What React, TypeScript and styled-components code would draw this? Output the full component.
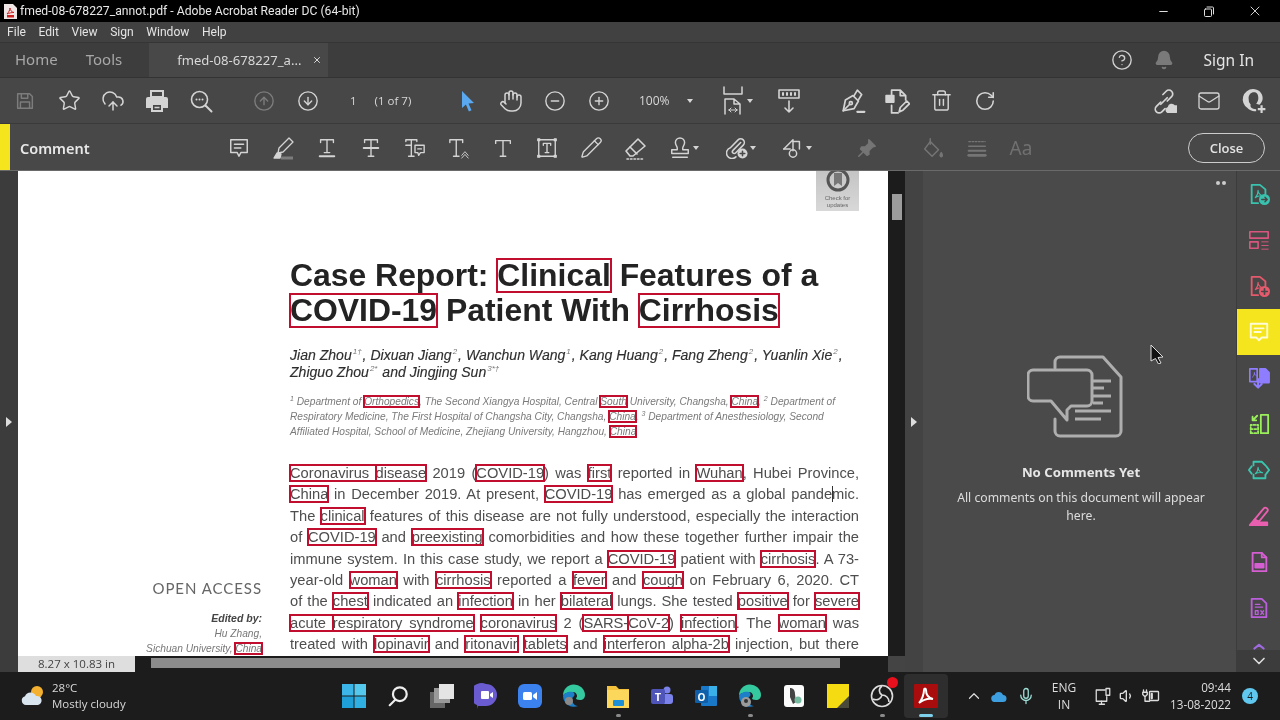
import React from 'react'
import styled, {createGlobalStyle} from 'styled-components'
import {
  Bell,
  ChevronDown,
  ChevronUp,
  CircleArrowDown,
  CircleArrowUp,
  CircleHelp,
  CircleMinus,
  CirclePlus,
  CloudUpload,
  Hand,
  Mail,
  Minus,
  Pencil,
  RotateCw,
  Star,
  Trash2,
  Volume1,
  X,
} from 'lucide-react'

const GlobalStyle = createGlobalStyle`
  html, body {
    margin: 0;
    padding: 0;
    width: 1280px;
    height: 720px;
    overflow: hidden;
    background: #1c1c1c;
    font-family: "Open Sans", "Noto Sans", sans-serif;
  }
`

// the reference is a video frame, everything in it is a little soft
const Screen = styled.div`
  width: 1280px;
  height: 720px;
  display: flex;
  flex-direction: column;
  position: relative;
  overflow: hidden;
  filter: blur(0.35px);
`

/* window chrome */
const TitleBar = styled.div`
  height: 22px;
  background: #000;
  color: #e8e8e8;
  display: flex;
  align-items: center;
  padding-left: 4px;
  gap: 3px;
  font-family: "Roboto", sans-serif;
  font-size: 12.18px;
  white-space: nowrap;
`

const WindowButtons = styled.div`
  margin-left: auto;
  padding-right: 2px;
  display: flex;
  align-items: center;
  color: #ddd;
`

const WindowButton = styled.div`
  width: 46px;
  height: 22px;
  display: flex;
  align-items: center;
  justify-content: center;
`

const MenuBar = styled.div`
  height: 21px;
  background: #414141;
  border-bottom: 1px solid #353535;
  box-sizing: border-box;
  color: #e4e4e4;
  display: flex;
  align-items: center;
  padding-left: 7px;
  gap: 12.5px;
  font-family: "Roboto", sans-serif;
  font-size: 12.1px;
`

const TabBar = styled.div`
  height: 35px;
  background: #3d3d3d;
  border-bottom: 1px solid #333;
  box-sizing: border-box;
  display: flex;
  align-items: stretch;
  font-family: "Noto Sans", sans-serif;
`

const NavTab = styled.div`
  color: #a8a8a8;
  font-size: 15px;
  display: flex;
  align-items: center;
  padding-left: 15px;
  padding-right: 13px;
  margin-top: -3px;
`

const OpenTab = styled.div`
  margin-left: 14px;
  width: 179px;
  background: #484848;
  color: #d8d8d8;
  font-size: 13.1px;
  display: flex;
  align-items: center;
  padding-left: 28px;
  box-sizing: border-box;
  gap: 11px;
`

const TabActions = styled.div`
  margin-left: auto;
  display: flex;
  align-items: center;
  color: #d0d0d0;
  gap: 21px;
  padding-right: 26px;
`

const SignIn = styled.span`
  color: #e4e4e4;
  font-size: 15.5px;
  margin-left: 9px;
`

const ToolBar = styled.div`
  height: 46px;
  background: #474747;
  border-bottom: 1px solid #3a3a3a;
  box-sizing: border-box;
  display: flex;
  align-items: center;
  padding-left: 3px;
  color: #d4d4d4;
`

const Slot = styled.div<{$dim?: boolean; $w?: number}>`
  width: ${(p) => p.$w ?? 44}px;
  height: 30px;
  flex: none;
  display: flex;
  align-items: center;
  justify-content: center;
  gap: 2px;
  color: ${(p) => (p.$dim ? '#7c7c7c' : 'inherit')};
`

const Gap = styled.div<{$w: number}>`
  width: ${(p) => p.$w}px;
  flex: none;
`

const PageField = styled.div`
  width: 115px;
  flex: none;
  display: flex;
  font-size: 11.5px;
  color: #d8d8d8;
  padding-left: 20px;
  box-sizing: border-box;
  gap: 18px;
`

const ZoomField = styled.div`
  width: 94px;
  flex: none;
  display: flex;
  align-items: center;
  font-size: 12px;
  color: #d8d8d8;
  padding-left: 18px;
  box-sizing: border-box;
  gap: 17px;
`

const Caret = styled.span`
  width: 0;
  height: 0;
  border-left: 3.5px solid transparent;
  border-right: 3.5px solid transparent;
  border-top: 4px solid currentColor;
  flex: none;
`

const RightGroup = styled.div`
  margin-left: auto;
  display: flex;
  padding-right: 4px;
`

const CommentBar = styled.div`
  height: 47px;
  background: #484848;
  border-bottom: 1px solid #6a6a6a;
  box-sizing: border-box;
  display: flex;
  align-items: center;
  color: #d4d4d4;
  padding-top: 1px;
`

const YellowTag = styled.div`
  width: 10px;
  align-self: stretch;
  margin-top: -1px;
  background: #f5e51e;
  flex: none;
`

const CommentLabel = styled.div`
  width: 207px;
  padding-left: 10px;
  box-sizing: border-box;
  font-family: "Noto Sans", sans-serif;
  font-size: 14.5px;
  font-weight: 600;
  color: #e8e8e8;
  flex: none;
`

const FontLabel = styled.span`
  font-family: "Noto Sans", sans-serif;
  font-size: 19px;
  color: #707070;
`

const CloseButton = styled.div`
  margin-left: auto;
  margin-right: 15px;
  width: 77px;
  height: 30px;
  box-sizing: border-box;
  border: 1.5px solid #ccc;
  border-radius: 15px;
  display: flex;
  align-items: center;
  justify-content: center;
  font-size: 13px;
  font-weight: 600;
  color: #e4e4e4;
`

/* main area */
const Main = styled.div`
  height: 501px;
  display: flex;
  background: #444;
`

const Gutter = styled.div`
  width: 18px;
  flex: none;
  background: #3c3c3c;
  display: flex;
  align-items: center;
  justify-content: center;
`

const SideArrow = styled.span`
  width: 0;
  height: 0;
  border-top: 5px solid transparent;
  border-bottom: 5px solid transparent;
  border-left: 6px solid #ddd;
`

const DocColumn = styled.div`
  width: 887px;
  flex: none;
  display: flex;
  flex-direction: column;
`

const DocRow = styled.div`
  height: 485px;
  display: flex;
`

const Page = styled.div`
  width: 870px;
  flex: none;
  background: #fff;
  display: flex;
  overflow: hidden;
  font-family: "Liberation Sans", Arial, sans-serif;
`

const VScroll = styled.div`
  width: 17px;
  background: #1c1c1c;
  padding: 23px 3px 0 4px;
  box-sizing: border-box;
`

const VThumb = styled.div`
  height: 26px;
  background: #9c9c9c;
`

const Margin = styled.div`
  width: 244px;
  flex: none;
  padding-top: 407px;
  text-align: right;
  color: #666;
`

const OpenAccess = styled.div`
  font-family: "Lato", sans-serif;
  font-size: 15px;
  line-height: 20px;
  letter-spacing: 0.95px;
  color: #666;
`

const EditedBy = styled.div`
  margin-top: 13px;
  font-size: 10.5px;
  line-height: 15px;
  font-weight: bold;
  font-style: italic;
  color: #444;
`

const Editor = styled.div`
  font-size: 10.2px;
  line-height: 15px;
  font-style: italic;
  color: #777;
  white-space: nowrap;
`

const Article = styled.div`
  width: 569px;
  margin-left: 28px;
  flex: none;
`

const UpdateRow = styled.div`
  height: 40px;
  display: flex;
  justify-content: flex-end;
`

const UpdateBadge = styled.div`
  width: 43px;
  height: 40px;
  background: linear-gradient(#c4c4c4, #d8d8d8);
  display: flex;
  flex-direction: column;
  align-items: center;
  font-size: 6px;
  line-height: 6.5px;
  color: #666;
  text-align: center;
`

const Title = styled.h1`
  margin: 47px 0 0;
  font-size: 31.9px;
  line-height: 35px;
  font-weight: bold;
  color: #232323;
  white-space: nowrap;
`

const Authors = styled.div`
  margin-top: 19px;
  font-size: 14.05px;
  line-height: 17px;
  font-style: italic;
  color: #2e2e2e;
  white-space: nowrap;
  -webkit-text-stroke: 0.15px #2e2e2e;

  sup {
    font-size: 8px;
    line-height: 0;
    color: #777;
    margin: 0 1px;
    -webkit-text-stroke: 0;
  }
`

const Affiliations = styled.div`
  margin-top: 13px;
  font-size: 10.2px;
  line-height: 15px;
  font-style: italic;
  color: #7a7a7a;
  white-space: nowrap;

  sup {
    font-size: 7px;
    line-height: 0;
  }
`

const Body = styled.div`
  margin-top: 24px;
  font-size: 14.7px;
  line-height: 21.4px;
  color: #4e4e4e;
`

const BodyLine = styled.div`
  text-align: justify;
  text-align-last: justify;
  white-space: nowrap;
`

const Mark = styled.span`
  outline: 2px solid #c20e2e;
  outline-offset: -1px;
`

const TitleMark = styled(Mark)`
  display: inline-block;
  line-height: 33px;
`

const Caretline = styled.span`
  border-left: 1px solid #333;
  margin: 0 -1px 0 0;
`

const StatusRow = styled.div`
  height: 16px;
  display: flex;
`

const SizeLabel = styled.div`
  width: 117px;
  flex: none;
  background: #dedede;
  color: #444;
  font-size: 11.5px;
  line-height: 16px;
  text-align: center;
`

const HTrack = styled.div`
  width: 753px;
  flex: none;
  background: #1c1c1c;
  padding: 2px 48px 4px 16px;
  box-sizing: border-box;
`

const HThumb = styled.div`
  height: 10px;
  background: #8c8c8c;
`

const Handle = styled.div`
  width: 18px;
  flex: none;
  background: #434343;
  display: flex;
  align-items: center;
  justify-content: center;
`

const CommentsPane = styled.div`
  width: 313px;
  flex: none;
  background: #4a4a4a;
  display: flex;
  flex-direction: column;
  align-items: center;
  box-sizing: border-box;
  padding: 184px 0 0 3px;
  position: relative;
  color: #e6e6e6;
  text-align: center;
`

const PaneDots = styled.div`
  position: absolute;
  top: 10px;
  right: 10px;
  display: flex;
  gap: 2px;
`

const PaneDot = styled.span`
  width: 4px;
  height: 4px;
  border-radius: 50%;
  background: #ccc;
`

const EmptyArt = styled.div`
  margin-right: 12px;
  height: 84px;
`

const EmptyTitle = styled.div`
  margin-top: 24px;
  font-size: 13.2px;
  line-height: 18px;
  font-weight: 700;
  font-family: "Noto Sans", sans-serif;
`

const EmptyText = styled.div`
  margin-top: 8px;
  width: 260px;
  font-size: 12.2px;
  line-height: 18px;
  color: #ddd;
  font-family: "Noto Sans", sans-serif;
`

const Rail = styled.div`
  width: 44px;
  flex: none;
  background: #474747;
  border-left: 1px solid #3c3c3c;
  box-sizing: border-box;
  display: flex;
  flex-direction: column;
  position: relative;
  overflow: hidden;
`

const RailItem = styled.div<{$on?: boolean}>`
  height: 46px;
  flex: none;
  display: flex;
  align-items: center;
  justify-content: center;
  background: ${(p) => (p.$on ? '#f5e51e' : 'transparent')};
`

const RailDown = styled.div`
  position: absolute;
  left: 0;
  right: 0;
  bottom: 0;
  height: 22px;
  background: #3c3c3c;
  display: flex;
  align-items: center;
  justify-content: center;
  color: #ddd;
`

/* taskbar */
const Taskbar = styled.div`
  height: 48px;
  flex: none;
  background: #1c1c1c;
  display: flex;
  align-items: center;
  color: #e4e4e4;
`

const Weather = styled.div`
  width: 332px;
  flex: none;
  display: flex;
  align-items: center;
  padding-left: 20px;
  box-sizing: border-box;
  gap: 6px;
`

const WeatherText = styled.div`
  font-size: 11.5px;
  line-height: 16px;
  color: #d8d8d8;
`

const TaskItem = styled.div<{$on?: boolean}>`
  width: 44px;
  height: 44px;
  flex: none;
  display: flex;
  align-items: center;
  justify-content: center;
  position: relative;
  border-radius: 4px;
  background: ${(p) => (p.$on ? '#2e2e2e' : 'transparent')};
`

const RunDot = styled.span<{$active?: boolean}>`
  position: absolute;
  bottom: 1px;
  left: 50%;
  width: ${(p) => (p.$active ? 14 : 5)}px;
  height: 3px;
  margin-left: ${(p) => (p.$active ? -7 : -2.5)}px;
  border-radius: 2px;
  background: ${(p) => (p.$active ? '#7fd0ec' : '#8a8a8a')};
`

const RedBadge = styled.span`
  position: absolute;
  top: 3px;
  right: 6px;
  width: 11px;
  height: 11px;
  border-radius: 50%;
  background: #e8101c;
`

const Tray = styled.div`
  margin-left: 13px;
  display: flex;
  align-items: center;
  color: #ddd;
`

const TraySlot = styled.div<{$w: number}>`
  width: ${(p) => p.$w}px;
  flex: none;
  display: flex;
  align-items: center;
  justify-content: center;
`

const Lang = styled.div`
  width: 44px;
  flex: none;
  text-align: center;
  font-size: 12px;
  line-height: 17px;
  margin: 0 4px 0 1px;
`

const Clock = styled.div`
  width: 70px;
  flex: none;
  text-align: right;
  font-size: 11.7px;
  line-height: 17px;
  margin-left: -2px;
`

const Notif = styled.div`
  width: 16px;
  height: 16px;
  border-radius: 50%;
  flex: none;
  margin-left: 11px;
  background: #60c8ee;
  color: #1c1c1c;
  font-size: 10px;
  line-height: 16px;
  text-align: center;
`

const Pointer = styled.svg`
  position: absolute;
  left: 1150px;
  top: 344px;
`

const Ico = ({w = 22, h = 22, vb, sw = 1.6, c = 'currentColor', children}: any) => (
  <svg
    width={w}
    height={h}
    viewBox={vb ?? '0 0 24 24'}
    fill="none"
    stroke={c}
    strokeWidth={sw}
    strokeLinecap="round"
    strokeLinejoin="round"
  >
    {children}
  </svg>
)

const line = (s: string, key: number) =>
  s.split(/(\[[^\]]+\])/).map((part, i) =>
    part.startsWith('[') ? <Mark key={`${key}-${i}`}>{part.slice(1, -1)}</Mark> : part,
  )

const bodyLines = [
  '[Coronavirus ][disease] 2019 ([COVID-19]) was [first] reported in [Wuhan], Hubei Province,',
  '[China] in December 2019. At present, [COVID-19] has emerged as a global pande|mic.',
  'The [clinical] features of this disease are not fully understood, especially the interaction',
  'of [COVID-19] and [preexisting] comorbidities and how these together further impair the',
  'immune system. In this case study, we report a [COVID-19] patient with [cirrhosis]. A 73-',
  'year-old [woman] with [cirrhosis] reported a [fever] and [cough] on February 6, 2020. CT',
  'of the [chest] indicated an [infection] in her [bilateral] lungs. She tested [positive] for [severe]',
  '[acute ][respiratory syndrome] [coronavirus] 2 ([SARS-][CoV-2]) [infection]. The [woman] was',
  'treated with [lopinavir] and [ritonavir] [tablets] and [interferon alpha-2b] injection, but there',
]

const SaveIcon = () => (
  <Ico>
    <path d="M4 4h13l3 3v13H4z" />
    <path d="M8 4v5h7V4M7 20v-7h10v7" />
  </Ico>
)

const PrintIcon = () => (
  <svg width="24" height="24" viewBox="0 0 24 24">
    <path d="M6 2h12v6H6z" fill="none" stroke="currentColor" strokeWidth="2" />
    <path d="M3 8h18a2 2 0 0 1 2 2v9h-5v-5H6v5H1v-9a2 2 0 0 1 2-2z" fill="currentColor" />
    <path d="M7 15h10v7H7z" fill="none" stroke="currentColor" strokeWidth="2" />
    <path d="M9.500 18.500h5" stroke="currentColor" strokeWidth="1.500" />
  </svg>
)

const FindIcon = () => (
  <Ico w={24} h={24}>
    <circle cx="10.5" cy="10.5" r="8" />
    <path d="M16.500 16.500l6 6" strokeWidth="2" />
    <path d="M7.5 10.5h.01M10.5 10.5h.01M13.5 10.5h.01" strokeWidth="2" />
  </Ico>
)

const Arrow = () => (
  <svg width="18" height="24" viewBox="0 0 18 24">
    <path d="M4 2l12 12-5.5.6 3 6.6-2.6 1.2-3-6.8L4 19z" fill="#5aa9f0" />
  </svg>
)

const FitIcon = () => (
  <Ico w={24} h={30} vb="0 0 24 30" sw={1.5}>
    <path d="M3 1v7h18V1" />
    <path d="M4 28V13h9l6 5v10M13 13v5h6" />
    <path d="M8 24h8M8 24l2-2M8 24l2 2M16 24l-2-2M16 24l-2 2" strokeWidth="1" />
  </Ico>
)

const RulerDown = () => (
  <Ico w={24} h={26} vb="0 0 24 26">
    <rect x="2" y="2" width="20" height="8" />
    <path d="M6 5v2M10 5v2M14 5v2M18 5v2" strokeWidth="2" />
    <path d="M12 13v11M8 20l4 4 4-4" />
  </Ico>
)

const PenSign = () => (
  <Ico w={26} h={26}>
    <path d="M3 21l2-10 7-4 5 5-4 7z" />
    <path d="M3 21l6-6M13 7l3-5 4 4-3 5" />
    <circle cx="10" cy="14" r="1.4" />
    <path d="M16 22h7" strokeWidth="2" strokeDasharray="1.5 1" />
  </Ico>
)

const EditFile = () => (
  <Ico w={26} h={26}>
    <path d="M2 7h7v6H2z" fill="currentColor" />
    <path d="M7 7V2h8l5 5v4M15 2v5h5" />
    <path d="M7 16v7h6" />
    <path d="M14 22l1-4 6-6 2.500 2.500-6 6z" />
  </Ico>
)

const LinkCloud = () => (
  <Ico w={26} h={26}>
    <path d="M9 13l-4 4a3.5 3.5 0 0 0 5 5l3-3" />
    <path d="M9 15l6-6M11 6l3-3a3.5 3.5 0 0 1 5 5l-4 4" />
    <path
      d="M15 23a3 3 0 0 1 .5-5.5A3.6 3.6 0 0 1 22 16a3.5 3.5 0 0 1 1.5 7z"
      fill="currentColor"
      stroke="none"
    />
  </Ico>
)

const UserAdd = () => (
  <svg width="26" height="26" viewBox="0 0 24 24">
    <path
      d="M11 1a9.500 9.500 0 0 0-5 17.500c1 1 3 3 8 3v-2c-4 0-6-2-5-4a8 8 0 0 1-2-6c0-3 2-5.500 5-5.500s4 2.500 4 5.500c0 2-1 4-2 5l3 1c2-2 3-4 3-6 0-5-4-8.500-9-8.500z"
      fill="currentColor"
    />
    <path d="M19 16v7M15.500 19.500h7" stroke="currentColor" strokeWidth="2" />
  </svg>
)

const NoteIcon = () => (
  <Ico>
    <path d="M3 3h18v14h-7l-2 4-2-4H3z" />
    <path d="M7 8h10M7 12h7" />
  </Ico>
)

const HighlightPen = () => (
  <Ico w={24} h={24} sw={1.3}>
    <path d="M7 17l1-5L18 2l4 4-10 10z" />
    <path d="M3 22l3-5 4 1-1 4z" fill="currentColor" />
    <path d="M10 22h12" stroke="#7c7c7c" strokeWidth="3" strokeLinecap="butt" />
  </Ico>
)

const TUnder = () => (
  <Ico sw={1.5}>
    <path d="M5 6V3h14v3M12 3v14M9 17h6" />
    <path d="M4 21h16" strokeWidth="2" />
  </Ico>
)

const TStrike = () => (
  <Ico sw={1.5}>
    <path d="M5 6V3h14v3M12 3v18M9 21h6" />
    <path d="M4 12h16" strokeWidth="2" />
  </Ico>
)

const TNote = () => (
  <Ico sw={1.5}>
    <path d="M2 5V3h12v2M8 3v18M5 21h6M2 9h6" />
    <path d="M12 9h10v8h-4l-2 3-1-3h-3z" />
    <path d="M15 13h4" />
  </Ico>
)

const TCaret = () => (
  <Ico sw={1.5}>
    <path d="M2 6V3h14v3M9 3v18M6 21h6" />
    <path d="M15 20l3.500-4 3.500 4M15 23l3.500-4 3.500 4" strokeWidth="1" />
  </Ico>
)

const TPlain = () => (
  <Ico sw={1.5}>
    <path d="M4 7V4h16v3M12 4v17M9 21h6" />
  </Ico>
)

const TBox = () => (
  <Ico sw={1.5}>
    <rect x="3" y="3" width="18" height="18" />
    <path d="M8 9V7h8v2M12 7v10M10 17h4" />
    <path d="M2 2h2v2H2zM20 2h2v2h-2zM2 20h2v2H2zM20 20h2v2h-2z" fill="currentColor" />
  </Ico>
)

const Eraser = () => (
  <Ico w={24} h={24}>
    <path d="M3 15L15 3l7 7-12 10H7z" />
    <path d="M7 11l7 7" />
    <path d="M4 23h16" strokeDasharray="1.5 2" />
  </Ico>
)

const StampIcon = () => (
  <Ico sw={1.6}>
    <path d="M9 12c0-2-2-3-2-6a5 5 0 0 1 10 0c0 3-2 4-2 6v2h6v4H3v-4h6z" />
    <path d="M4 22h16" />
  </Ico>
)

const ClipAdd = () => (
  <Ico sw={1.7}>
    <path d="m16 6-8.414 8.586a2 2 0 0 0 2.829 2.829l8.414-8.586a4 4 0 1 0-5.657-5.657l-8.379 8.551a6 6 0 1 0 6 10" />
    <circle cx="18" cy="18" r="5.500" fill="currentColor" stroke="none" />
    <path d="M18 15.500v5M15.500 18h5" stroke="#484848" />
  </Ico>
)

const Shapes = () => (
  <Ico>
    <path d="M2 13L12 3v12" />
    <path d="M2 13h7M12 5h7v8" />
    <circle cx="12" cy="18" r="4" />
  </Ico>
)

const Pin = () => (
  <Ico c="#757575">
    <path d="M14 3l7 7-3 1-4 4v4l-2 1-7-7 1-2h4l4-4z" fill="#757575" />
    <path d="M8 16l-5 5" />
  </Ico>
)

const Bucket = () => (
  <Ico c="#757575">
    <path d="M9 5l9 9-7 7-8-8z" />
    <path d="M9 2v6" />
    <path d="M21 17c1 2 2 3 1 4s-3 0-2-2z" fill="#757575" />
  </Ico>
)

const Lines = () => (
  <Ico c="#757575">
    <path d="M3 5h18" strokeDasharray="2 1.5" strokeWidth="1.2" />
    <path d="M3 10h18" strokeWidth="1.6" />
    <path d="M3 15h18" strokeWidth="2.4" />
    <path d="M3 20h18" strokeWidth="3" />
  </Ico>
)

const AcrobatFile = ({c, badge}: {c: string; badge: React.ReactNode}) => (
  <Ico c={c} sw={2}>
    <path d="M11 22H4V2h9l6 5v5" />
    <path d="M8 16c2-2 3-6 3-8 0 3 2 5 5 6-3-.5-6 .5-8 2z" strokeWidth="1.2" />
    {badge}
  </Ico>
)

const ArrowBadge = ({c}: {c: string}) => (
  <g>
    <circle cx="18" cy="18" r="6" fill={c} stroke="none" />
    <path d="M15 18h6M18.500 15.500L21 18l-2.500 2.500" stroke="#474747" strokeWidth="1.500" />
  </g>
)

const PlusBadge = ({c}: {c: string}) => (
  <g>
    <circle cx="18" cy="18" r="6" fill={c} stroke="none" />
    <path d="M15 18h6M18 15v6" stroke="#474747" strokeWidth="1.800" />
  </g>
)

const rail: React.ReactNode[] = [
  <AcrobatFile c="#39c2ae" badge={<ArrowBadge c="#39c2ae" />} />,
  <Ico c="#d9567f" sw={1.8}>
    <rect x="2" y="3" width="20" height="7" />
    <rect x="2" y="14" width="9" height="7" />
    <path d="M15 14h7M15 18h7M15 22h7" strokeWidth="1" />
  </Ico>,
  <AcrobatFile c="#e55a6c" badge={<PlusBadge c="#e55a6c" />} />,
  <Ico c="#fdfbd8" sw={2}>
    <path d="M3 3h18v15h-6l-3 3-3-3H3z" />
    <path d="M7 8h10M7 12h7" />
  </Ico>,
  <Ico c="#8f7dff" sw={1.8}>
    <path d="M10 16H2V2h8v14z" />
    <path d="M13 2h6l4 4v11H13z" fill="#8f7dff" />
    <path d="M5 11c1.500-1 2-3 2-5 0 2 1 3 2 3.500" strokeWidth="1" />
    <path d="M11 13v9M7 18.500l4 4 4-4" strokeWidth="2.200" />
  </Ico>,
  <Ico c="#9bef5c" sw={2}>
    <rect x="14" y="2" width="8" height="20" />
    <path d="M3 22v-9h8v9zM3 17.500h8" strokeDasharray="2 2" />
    <path d="M10 3L5 8M5 4v4h4" />
  </Ico>,
  <Ico c="#3ac6ae" sw={2}>
    <path d="M6 7V3h9l4 4M6 17v4h13v-4" />
    <path d="M4 8l-3 4 3 4M20 8l3 4-3 4" />
    <path d="M8 16c2-1.500 3-5 3-7 0 3 2 5 5 6-3-.5-6 0-8 1z" strokeWidth="1.200" />
  </Ico>,
  <Ico c="#ea5fb0" sw={2}>
    <path d="M7 16L17 4a2 2 0 0 1 4 3L12 18z" />
    <path d="M2 22l5-6 5 2 1 1h8v3z" fill="#ea5fb0" />
  </Ico>,
  <Ico c="#d55fd2" sw={2}>
    <path d="M5 2h10l5 5v15H5z" />
    <path d="M15 2v5h5" />
    <rect x="8" y="14" width="9" height="4" fill="#d55fd2" />
  </Ico>,
  <Ico c="#bc5fdc" sw={2}>
    <path d="M4 2h11l5 5v15H4z" />
    <path d="M8 8h5M8 11h8" strokeWidth="1.400" />
    <path d="M8 15h3v4H8zM14 15l3 4M17 15l-3 4" strokeWidth="1.400" />
  </Ico>,
  <Ico c="#a06ae0" sw={2.4}>
    <path d="M7 6l5-4 5 4" />
  </Ico>,
]

const WinLogo = () => (
  <svg width="24" height="24" viewBox="0 0 24 24">
    <rect x="0" y="0" width="11.500" height="11.500" fill="#3cb6e8" />
    <rect x="12.500" y="0" width="11.500" height="11.500" fill="#55c8ee" />
    <rect x="0" y="12.500" width="11.500" height="11.500" fill="#1f9fd8" />
    <rect x="12.500" y="12.500" width="11.500" height="11.500" fill="#30b0e2" />
  </svg>
)

const SearchGlyph = () => (
  <Ico c="#eee" sw={2.4}>
    <circle cx="14" cy="10" r="7.500" />
    <path d="M9 16l-6 6" />
  </Ico>
)

const DesktopGlyph = () => (
  <svg width="24" height="24" viewBox="0 0 24 24">
    <rect x="0" y="8" width="15" height="16" fill="#666" />
    <rect x="4" y="4" width="16" height="15" fill="#999" />
    <rect x="9" y="0" width="15" height="15" fill="#e4e4e4" />
  </svg>
)

const MeetGlyph = () => (
  <svg width="24" height="26" viewBox="0 0 24 26">
    <path d="M12 1a11 11 0 0 1 0 22H4v3l-1-4A11 11 0 0 1 12 1z" fill="#6b5bd0" />
    <rect x="7" y="8" width="8" height="8" rx="1" fill="#fff" />
    <path d="M16 11l3-2v6l-3-2z" fill="#fff" />
  </svg>
)

const ZoomGlyph = () => (
  <svg width="24" height="24" viewBox="0 0 24 24">
    <rect width="24" height="24" rx="6" fill="#3b82ee" />
    <rect x="5" y="8" width="9" height="8" rx="1.500" fill="#fff" />
    <path d="M15 11l4-3v8l-4-3z" fill="#fff" />
  </svg>
)

const EdgeGlyph = ({face}: {face?: boolean}) => (
  <svg width="24" height="24" viewBox="0 0 24 24">
    <path d="M1 12A11 11 0 0 1 23 11c0 3-2 5-5 5-3 0-4-1-4-2 2-1 1-6-3-6-5 0-10 2-10 4z" fill="#35c9a0" />
    <path d="M1 12c1-3 6-5 10-4 2 1 2 4 0 5-2 2-1 8 5 9a11 11 0 0 1-15-10z" fill="#1d7fc8" />
    {face && <circle cx="8" cy="18" r="5" fill="#9a9a9a" />}
    {face && <circle cx="8" cy="17" r="2" fill="#333" />}
    {!face && <circle cx="7" cy="17" r="4" fill="#8a8a8a" />}
  </svg>
)

const FolderGlyph = () => (
  <svg width="24" height="26" viewBox="0 0 24 26">
    <path d="M1 3h9l3 3h10v19H1z" fill="#f4c23c" />
    <rect x="1" y="7" width="22" height="18" fill="#fbd75c" />
    <rect x="7" y="17" width="11" height="6" rx="1" fill="#1c8fd6" />
  </svg>
)

const TeamsGlyph = () => (
  <svg width="24" height="24" viewBox="0 0 24 24">
    <circle cx="17" cy="6" r="3.500" fill="#7b83eb" />
    <rect x="12" y="10" width="11" height="10" rx="3" fill="#7b83eb" />
    <rect x="1" y="5" width="14" height="15" rx="2" fill="#4f55b8" />
    <text x="8" y="16.500" textAnchor="middle" fontSize="11" fontWeight="700" fill="#fff" fontFamily="Open Sans">
      T
    </text>
  </svg>
)

const OutlookGlyph = () => (
  <svg width="24" height="24" viewBox="0 0 24 24">
    <rect x="7" y="2" width="16" height="20" rx="1" fill="#1a78c8" />
    <rect x="15" y="2" width="8" height="10" fill="#39b0e8" />
    <rect x="1" y="6" width="13" height="13" rx="1" fill="#0f5ea8" />
    <text x="7.500" y="16.500" textAnchor="middle" fontSize="10" fontWeight="700" fill="#fff" fontFamily="Open Sans">
      O
    </text>
  </svg>
)

const MailShot = () => (
  <svg width="20" height="22" viewBox="0 0 20 22">
    <rect width="20" height="22" rx="3" fill="#fbfbfb" />
    <path d="M6 3c3 0 5 2 5 6l1 8-3 2-3-7z" fill="#444" />
    <circle cx="14" cy="15" r="3.500" fill="#75bba0" />
  </svg>
)

const Sticky = () => (
  <svg width="22" height="24" viewBox="0 0 22 24">
    <rect width="22" height="24" fill="#f5dc12" />
    <path d="M22 12v12H10z" fill="#4a4a3a" />
  </svg>
)

const ObsGlyph = () => (
  <svg width="24" height="24" viewBox="0 0 24 24" fill="none" stroke="#ddd" strokeWidth="1.600">
    <circle cx="12" cy="12" r="10.500" />
    <path d="M12 2c-4 3-3 7 0 9M12 11c-1 4-5 6-9 4M12 11c4 0 7 3 7 7" />
  </svg>
)

const AcrobatGlyph = () => (
  <svg width="24" height="24" viewBox="0 0 24 24">
    <rect width="24" height="24" rx="1" fill="#a80c0c" />
    <path d="M5 19c3-3 5-9 5-13 0-2 2-2 2 0 0 5 3 8 7 9-5-1-9 0-14 4z" fill="none" stroke="#fff" strokeWidth="2" />
  </svg>
)

const PdfTitleIcon = () => (
  <svg width="13" height="15" viewBox="0 0 13 15">
    <path d="M0 0h9l4 4v11H0z" fill="#f1e6e6" />
    <path d="M3 10c1.500-1.500 3-4 3-6 0 2 1.500 4 4 4.500-2.500 0-5 .5-7 1.500z" fill="none" stroke="#c22" />
    <rect x="3" y="11" width="7" height="2.500" fill="#c22" />
  </svg>
)

const CloudWeather = () => (
  <svg width="26" height="24" viewBox="0 0 26 24">
    <circle cx="17" cy="8" r="6" fill="#f4b030" />
    <path d="M6 21a4.500 4.500 0 0 1-1-8.800A6 6 0 0 1 16 12a4.500 4.500 0 0 1 2 9z" fill="#d8e4ee" />
  </svg>
)

const CloudTray = () => (
  <svg width="16" height="11" viewBox="0 0 16 11">
    <path d="M4 11a3.500 3.500 0 0 1-.5-7A4.500 4.500 0 0 1 12 4a3.500 3.500 0 0 1 0 7z" fill="#3d9fe0" />
  </svg>
)

const Network = () => (
  <Ico w={18} h={18} sw={1.7}>
    <path d="M15 4H3v15h14v-6" />
    <path d="M7 23h7M10 19v4" />
    <rect x="16" y="2" width="5" height="9" />
  </Ico>
)

const Battery = () => (
  <Ico w={18} h={18} sw={1.8}>
    <rect x="10" y="6" width="12" height="12" rx="1" />
    <path d="M13 9v6" strokeWidth="3" />
    <path d="M2 4v3M6 4v3M1 7h6v3l-3 3-3-3zM4 13v6h6" />
  </Ico>
)

const Mic = () => (
  <Ico w={18} h={20} c="#9ee0d8" sw={1.7}>
    <rect x="9" y="2" width="6" height="13" rx="3" />
    <path d="M5 11a7 7 0 0 0 14 0M12 18v4" />
  </Ico>
)

const BigComment = () => (
  <svg width="96" height="84" viewBox="0 0 96 84" fill="none" stroke="#aeaeae" strokeWidth="3" strokeLinecap="round" strokeLinejoin="round">
    <path d="M28 64v12a5 5 0 0 0 5 5h56a5 5 0 0 0 5-5V22L76 2H33a5 5 0 0 0-5 5v6" />
    <path d="M6 15h54a5 5 0 0 1 5 5v26a5 5 0 0 1-5 5H44l-4 4v10L24 46H6a5 5 0 0 1-5-5V20a5 5 0 0 1 5-5z" />
    <path d="M66 26h18M66 33h11M66 41h18M66 48h10M48 56h36M48 64h26" strokeLinecap="butt" />
  </svg>
)

export default function App() {
  return (
    <>
      <GlobalStyle />
      <Screen>
        <TitleBar>
          <PdfTitleIcon />
          <span>fmed-08-678227_annot.pdf - Adobe Acrobat Reader DC (64-bit)</span>
          <WindowButtons>
            <WindowButton>
              <Minus size={13} />
            </WindowButton>
            <WindowButton>
              <Ico w={12} h={13} sw={2}>
                <rect x="3" y="7" width="14" height="15" rx="2" />
                <path d="M8 3h11a2 2 0 0 1 2 2v12" />
              </Ico>
            </WindowButton>
            <WindowButton>
              <X size={16} strokeWidth={1.4} />
            </WindowButton>
          </WindowButtons>
        </TitleBar>
        <MenuBar>
          <span>File</span>
          <span>Edit</span>
          <span>View</span>
          <span>Sign</span>
          <span>Window</span>
          <span>Help</span>
        </MenuBar>
        <TabBar>
          <NavTab>Home</NavTab>
          <NavTab>Tools</NavTab>
          <OpenTab>
            <span>fmed-08-678227_a...</span>
            <X size={10} strokeWidth={2.4} />
          </OpenTab>
          <TabActions>
            <CircleHelp size={22} strokeWidth={1.5} />
            <Bell size={20} fill="#7a7a7a" color="#7a7a7a" />
            <SignIn>Sign In</SignIn>
          </TabActions>
        </TabBar>
        <ToolBar>
          <Slot $dim>
            <SaveIcon />
          </Slot>
          <Slot>
            <Star size={23} strokeWidth={1.5} />
          </Slot>
          <Slot>
            <CloudUpload size={24} strokeWidth={1.5} />
          </Slot>
          <Slot>
            <PrintIcon />
          </Slot>
          <Slot>
            <FindIcon />
          </Slot>
          <Gap $w={19} />
          <Slot $dim>
            <CircleArrowUp size={22} strokeWidth={1.5} />
          </Slot>
          <Slot>
            <CircleArrowDown size={22} strokeWidth={1.5} />
          </Slot>
          <PageField>
            <span>1</span>
            <span>(1 of 7)</span>
          </PageField>
          <Slot>
            <Arrow />
          </Slot>
          <Slot>
            <Hand size={24} strokeWidth={1.5} />
          </Slot>
          <Slot>
            <CircleMinus size={22} strokeWidth={1.5} />
          </Slot>
          <Slot>
            <CirclePlus size={22} strokeWidth={1.5} />
          </Slot>
          <ZoomField>
            <span>100%</span>
            <Caret />
          </ZoomField>
          <Slot>
            <FitIcon />
            <Caret />
          </Slot>
          <Gap $w={8} />
          <Slot>
            <RulerDown />
          </Slot>
          <Gap $w={20} />
          <Slot>
            <PenSign />
          </Slot>
          <Slot>
            <EditFile />
          </Slot>
          <Slot>
            <Trash2 size={23} strokeWidth={1.5} />
          </Slot>
          <Slot>
            <RotateCw size={22} strokeWidth={1.7} />
          </Slot>
          <RightGroup>
            <Slot>
              <LinkCloud />
            </Slot>
            <Slot $w={45}>
              <Mail size={24} strokeWidth={1.3} />
            </Slot>
            <Slot $w={45}>
              <UserAdd />
            </Slot>
          </RightGroup>
        </ToolBar>
        <CommentBar>
          <YellowTag />
          <CommentLabel>Comment</CommentLabel>
          <Slot>
            <NoteIcon />
          </Slot>
          <Slot>
            <HighlightPen />
          </Slot>
          <Slot>
            <TUnder />
          </Slot>
          <Slot>
            <TStrike />
          </Slot>
          <Slot>
            <TNote />
          </Slot>
          <Slot>
            <TCaret />
          </Slot>
          <Slot>
            <TPlain />
          </Slot>
          <Slot>
            <TBox />
          </Slot>
          <Slot>
            <Pencil size={23} strokeWidth={1.4} />
          </Slot>
          <Slot>
            <Eraser />
          </Slot>
          <Gap $w={5} />
          <Slot>
            <StampIcon />
            <Caret />
          </Slot>
          <Gap $w={13} />
          <Slot>
            <ClipAdd />
            <Caret />
          </Slot>
          <Gap $w={12} />
          <Slot>
            <Shapes />
            <Caret />
          </Slot>
          <Gap $w={26} />
          <Slot>
            <Pin />
          </Slot>
          <Gap $w={22} />
          <Slot>
            <Bucket />
          </Slot>
          <Slot>
            <Lines />
          </Slot>
          <Slot>
            <FontLabel>Aa</FontLabel>
          </Slot>
          <CloseButton>Close</CloseButton>
        </CommentBar>
        <Main>
          <Gutter>
            <SideArrow />
          </Gutter>
          <DocColumn>
            <DocRow>
              <Page>
                <Margin>
                  <OpenAccess>OPEN ACCESS</OpenAccess>
                  <EditedBy>Edited by:</EditedBy>
                  <Editor>Hu Zhang,</Editor>
                  <Editor>
                    Sichuan University, <Mark>China</Mark>
                  </Editor>
                </Margin>
                <Article>
                  <UpdateRow>
                    <UpdateBadge>
                      <svg width="24" height="24" viewBox="0 0 24 24" fill="none">
                        <circle cx="12" cy="9" r="10" stroke="#555" strokeWidth="3" />
                        <path d="M8 2h8v13l-4-3-4 3z" fill="#777" />
                      </svg>
                      <span>Check for</span>
                      <span>updates</span>
                    </UpdateBadge>
                  </UpdateRow>
                  <Title>
                    Case Report: <TitleMark>Clinical</TitleMark> Features of a
                    <br />
                    <TitleMark>COVID-19</TitleMark> Patient With <TitleMark>Cirrhosis</TitleMark>
                  </Title>
                  <Authors>
                    Jian Zhou<sup>1†</sup>, Dixuan Jiang<sup>2</sup>, Wanchun Wang<sup>1</sup>, Kang Huang
                    <sup>2</sup>, Fang Zheng<sup>2</sup>, Yuanlin Xie<sup>2</sup>,
                    <br />
                    Zhiguo Zhou<sup>2*</sup> and Jingjing Sun<sup>3*†</sup>
                  </Authors>
                  <Affiliations>
                    <sup>1</sup> Department of <Mark>Orthopedics</Mark>, The Second Xiangya Hospital, Central{' '}
                    <Mark>South</Mark> University, Changsha, <Mark>China</Mark>, <sup>2</sup> Department of
                    <br />
                    Respiratory Medicine, The First Hospital of Changsha City, Changsha, <Mark>China</Mark>,{' '}
                    <sup>3</sup> Department of Anesthesiology, Second
                    <br />
                    Affiliated Hospital, School of Medicine, Zhejiang University, Hangzhou, <Mark>China</Mark>
                  </Affiliations>
                  <Body>
                    {bodyLines.map((text, i) => {
                      if (text.includes('|')) {
                        const [a, b] = text.split('|')
                        return (
                          <BodyLine key={i}>
                            {line(a, i)}
                            <Caretline />
                            {b}
                          </BodyLine>
                        )
                      }
                      return <BodyLine key={i}>{line(text, i)}</BodyLine>
                    })}
                  </Body>
                </Article>
              </Page>
              <VScroll>
                <VThumb />
              </VScroll>
            </DocRow>
            <StatusRow>
              <SizeLabel>8.27 x 10.83 in</SizeLabel>
              <HTrack>
                <HThumb />
              </HTrack>
            </StatusRow>
          </DocColumn>
          <Handle>
            <SideArrow />
          </Handle>
          <CommentsPane>
            <PaneDots>
              <PaneDot />
              <PaneDot />
            </PaneDots>
            <EmptyArt>
              <BigComment />
            </EmptyArt>
            <EmptyTitle>No Comments Yet</EmptyTitle>
            <EmptyText>All comments on this document will appear here.</EmptyText>
          </CommentsPane>
          <Rail>
            {rail.map((icon, i) => (
              <RailItem key={i} $on={i === 3}>
                {icon}
              </RailItem>
            ))}
            <RailDown>
              <ChevronDown size={20} />
            </RailDown>
          </Rail>
        </Main>
        <Taskbar>
          <Weather>
            <CloudWeather />
            <WeatherText>
              28°C
              <br />
              Mostly cloudy
            </WeatherText>
          </Weather>
          <TaskItem>
            <WinLogo />
          </TaskItem>
          <TaskItem>
            <SearchGlyph />
          </TaskItem>
          <TaskItem>
            <DesktopGlyph />
          </TaskItem>
          <TaskItem>
            <MeetGlyph />
          </TaskItem>
          <TaskItem>
            <ZoomGlyph />
          </TaskItem>
          <TaskItem>
            <EdgeGlyph />
          </TaskItem>
          <TaskItem>
            <FolderGlyph />
            <RunDot />
          </TaskItem>
          <TaskItem>
            <TeamsGlyph />
          </TaskItem>
          <TaskItem>
            <OutlookGlyph />
          </TaskItem>
          <TaskItem>
            <EdgeGlyph face />
            <RunDot />
          </TaskItem>
          <TaskItem>
            <MailShot />
          </TaskItem>
          <TaskItem>
            <Sticky />
          </TaskItem>
          <TaskItem>
            <ObsGlyph />
            <RedBadge />
            <RunDot />
          </TaskItem>
          <TaskItem $on>
            <AcrobatGlyph />
            <RunDot $active />
          </TaskItem>
          <Tray>
            <TraySlot $w={26}>
              <ChevronUp size={18} strokeWidth={1.6} />
            </TraySlot>
            <TraySlot $w={24}>
              <CloudTray />
            </TraySlot>
            <TraySlot $w={30}>
              <Mic />
            </TraySlot>
            <Lang>
              ENG
              <br />
              IN
            </Lang>
            <TraySlot $w={25}>
              <Network />
            </TraySlot>
            <TraySlot $w={24}>
              <Volume1 size={16} />
            </TraySlot>
            <TraySlot $w={24}>
              <Battery />
            </TraySlot>
            <Clock>
              09:44
              <br />
              13-08-2022
            </Clock>
            <Notif>4</Notif>
          </Tray>
        </Taskbar>
        <Pointer width="14" height="20" viewBox="0 0 14 20">
          <path d="M1 1l12 12-5 .5 3 5.500-2.500 1-3-5.500L1 17z" fill="#111" stroke="#ddd" strokeWidth="1" />
        </Pointer>
      </Screen>
    </>
  )
}
